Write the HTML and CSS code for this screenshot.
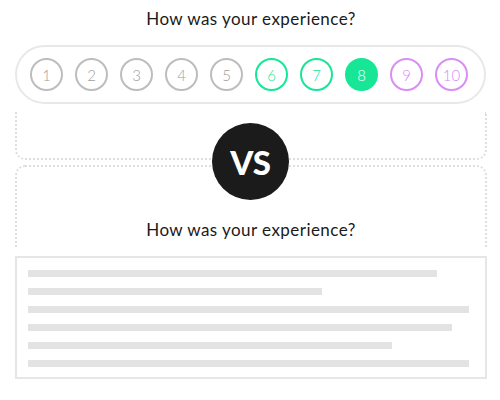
FILE: index.html
```html
<!DOCTYPE html>
<html>
<head>
<meta charset="utf-8">
<link rel="stylesheet" href="styles.css">
</head>
<body>
<div class="page">
  <div class="title">How was your experience?</div>
  <div class="pill">
    <span class="num gray">1</span>
    <span class="num gray">2</span>
    <span class="num gray">3</span>
    <span class="num gray">4</span>
    <span class="num gray">5</span>
    <span class="num green">6</span>
    <span class="num green">7</span>
    <span class="num green filled">8</span>
    <span class="num purple">9</span>
    <span class="num purple">10</span>
  </div>
  <div class="compare">
    <div class="box top"></div>
    <div class="box bottom">
      <div class="title2">How was your experience?</div>
    </div>
    <div class="vs">VS</div>
  </div>
  <div class="textbox">
    <div class="line w1"></div>
    <div class="line w2"></div>
    <div class="line w3"></div>
    <div class="line w4"></div>
    <div class="line w5"></div>
    <div class="line w3"></div>
  </div>
</div>
</body>
</html>
```
FILE: styles.css
```css
* { box-sizing: border-box; }
body {
  margin: 0;
  background: #fff;
  font-family: "Lato", "Noto Sans", sans-serif;
  color: #1a1a1a;
}
.page {
  width: 472px;
  margin-left: 15px;
}
.title {
  height: 45px;
  padding-top: 8px;
  text-align: center;
  font-size: 17px;
  letter-spacing: 0.45px;
}
.pill {
  width: 471px;
  height: 59px;
  border: 2px solid #e8e8e8;
  border-radius: 30px;
  display: flex;
  align-items: center;
  gap: 12px;
  padding-left: 13px;
}
.num {
  width: 33px;
  height: 33px;
  border-radius: 50%;
  border: 2px solid;
  display: flex;
  align-items: center;
  justify-content: center;
  font-size: 15px;
  font-weight: 300;
}
.gray { border-color: #bdbdbd; color: #9e9e9e; }
.green { border-color: #16e696; color: #16e696; }
.filled { background: #16e696; color: #fff; }
.purple { border-color: #d98df5; color: #d98df5; }
.compare {
  position: relative;
  margin-top: 8px;
}
.box {
  border: 2px dotted #dedede;
}
.box.top {
  height: 48px;
  border-top: none;
  border-radius: 0 0 10px 10px;
}
.box.bottom {
  height: 82px;
  margin-top: 5px;
  border-bottom: none;
  border-radius: 10px 10px 0 0;
  display: flex;
  align-items: flex-end;
  justify-content: center;
  padding-bottom: 7px;
}
.title2 {
  font-size: 17px;
  letter-spacing: 0.45px;
}
.vs {
  position: absolute;
  left: 197px;
  top: 11px;
  width: 77px;
  height: 77px;
  border-radius: 50%;
  background: #1b1b1b;
  color: #fff;
  display: flex;
  align-items: center;
  justify-content: center;
  font-size: 33px;
  font-weight: 900;
  letter-spacing: 0;
}
.textbox {
  margin-top: 9px;
  height: 123px;
  border: 2px solid #e6e6e6;
  padding: 12px 0 0 11px;
  display: flex;
  flex-direction: column;
  gap: 11px;
}
.line {
  height: 7px;
  background: #e3e3e3;
}
.w1 { width: 409px; }
.w2 { width: 294px; }
.w3 { width: 441px; }
.w4 { width: 424px; }
.w5 { width: 364px; }
```
